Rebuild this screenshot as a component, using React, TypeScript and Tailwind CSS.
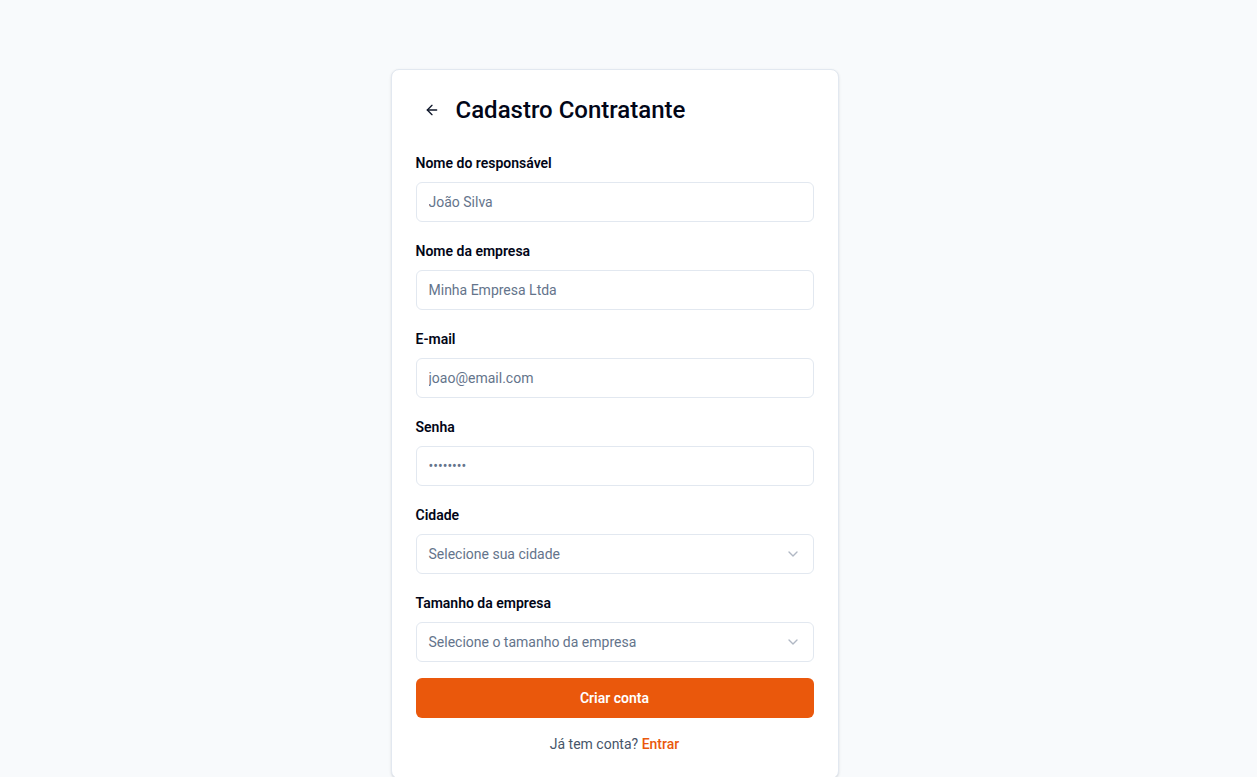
import { ArrowLeft, ChevronDown } from "lucide-react";

const fields = [
  { label: "Nome do responsável", placeholder: "João Silva" },
  { label: "Nome da empresa", placeholder: "Minha Empresa Ltda" },
  { label: "E-mail", placeholder: "joao@email.com" },
  { label: "Senha", placeholder: "••••••••" },
];

const selects = [
  { label: "Cidade", placeholder: "Selecione sua cidade" },
  { label: "Tamanho da empresa", placeholder: "Selecione o tamanho da empresa" },
];

const App = () => {
  return (
    <div
      className="min-h-screen bg-[#f8fafc] pt-[69px] pb-[79px] pl-4 pr-[44px]"
      style={{ fontFamily: 'Roboto, "Noto Sans", sans-serif' }}
    >
      <div className="mx-auto w-full max-w-md rounded-lg border border-[#e2e8f0] bg-white p-6 shadow-sm">
        {/* Header */}
        <div className="mb-6 flex h-8 items-center gap-2">
          <button className="flex h-8 w-8 items-center justify-center rounded-md text-[#0f172a]">
            <ArrowLeft size={16} strokeWidth={2} />
          </button>
          <h1 className="text-2xl font-medium leading-8 text-[#020617]">
            Cadastro Contratante
          </h1>
        </div>

        <form className="flex flex-col gap-4" onSubmit={(e) => e.preventDefault()}>
          {fields.map((field) => (
            <div key={field.label}>
              <label className="mb-[7px] block pt-px text-sm font-semibold leading-6 text-[#020617]">
                {field.label}
              </label>
              <input
                type="text"
                placeholder={field.placeholder}
                className="block h-10 w-full rounded-md border border-[#e2e8f0] bg-white px-3 text-sm text-[#0f172a] outline-none placeholder:text-[#64748b]"
              />
            </div>
          ))}

          {selects.map((select) => (
            <div key={select.label}>
              <label className="mb-[7px] block pt-px text-sm font-semibold leading-6 text-[#020617]">
                {select.label}
              </label>
              <button
                type="button"
                className="flex h-10 w-full items-center justify-between rounded-md border border-[#e2e8f0] bg-white px-3 text-sm text-[#64748b]"
              >
                <span>{select.placeholder}</span>
                <ChevronDown size={16} className="opacity-50" />
              </button>
            </div>
          ))}

          <button
            type="submit"
            className="h-10 w-full rounded-md bg-[#ea580c] text-sm font-semibold text-white"
          >
            Criar conta
          </button>
        </form>

        <p className="mt-4 text-center text-sm leading-5 text-[#475569]">
          Já tem conta?{" "}
          <a href="#" className="font-medium text-[#ea580c]">
            Entrar
          </a>
        </p>
      </div>
    </div>
  );
};

export default App;
